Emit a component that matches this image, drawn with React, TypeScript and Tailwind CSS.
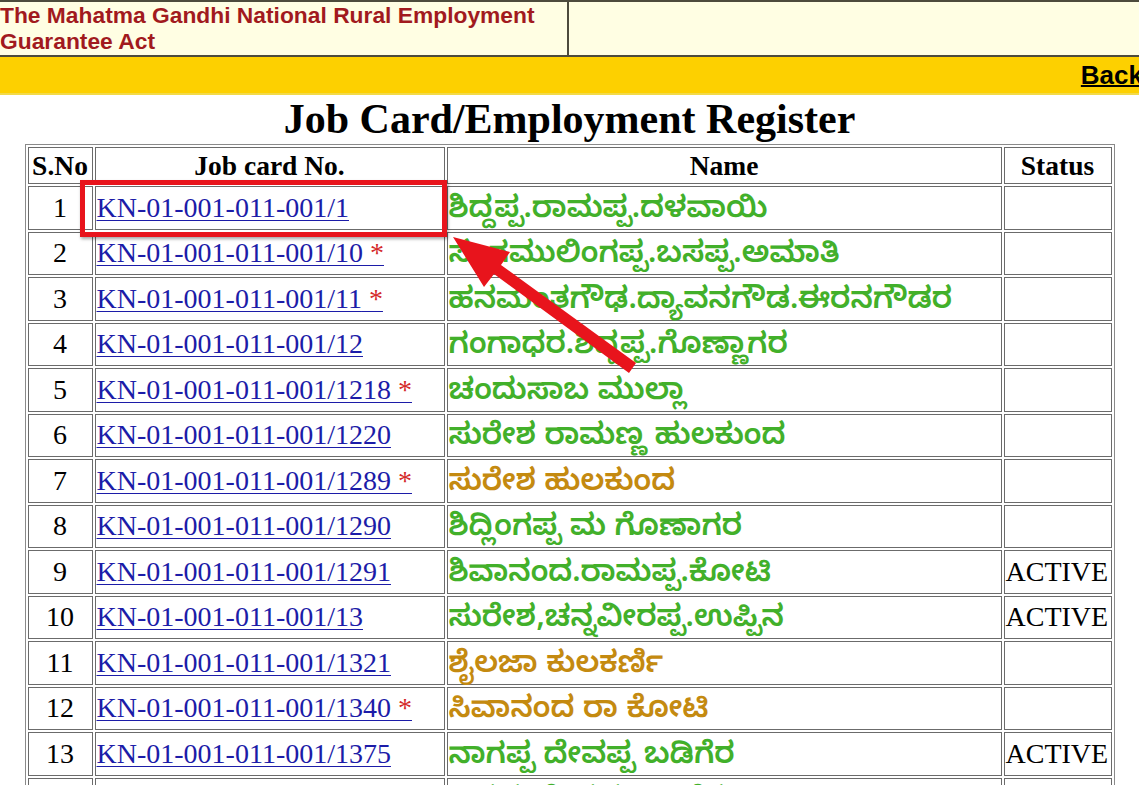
import React from "react";

type Row = {
  sno: number;
  card: string;
  star?: boolean;
  name: string;
  gold?: boolean;
  status?: string;
};

const rows: Row[] = [
  { sno: 1, card: "KN-01-001-011-001/1", name: "ಶಿದ್ದಪ್ಪ.ರಾಮಪ್ಪ.ದಳವಾಯಿ" },
  { sno: 2, card: "KN-01-001-011-001/10", star: true, name: "ಸಂಗಮುಲಿಂಗಪ್ಪ.ಬಸಪ್ಪ.ಅಮಾತಿ" },
  { sno: 3, card: "KN-01-001-011-001/11", star: true, name: "ಹನಮಂತಗೌಢ.ದ್ಯಾವನಗೌಡ.ಈರನಗೌಡರ" },
  { sno: 4, card: "KN-01-001-011-001/12", name: "ಗಂಗಾಧರ.ಶಿದ್ದಪ್ಪ.ಗೊಣ್ಣಾಗರ" },
  { sno: 5, card: "KN-01-001-011-001/1218", star: true, name: "ಚಂದುಸಾಬ ಮುಲ್ಲಾ" },
  { sno: 6, card: "KN-01-001-011-001/1220", name: "ಸುರೇಶ ರಾಮಣ್ಣ ಹುಲಕುಂದ" },
  { sno: 7, card: "KN-01-001-011-001/1289", star: true, name: "ಸುರೇಶ ಹುಲಕುಂದ", gold: true },
  { sno: 8, card: "KN-01-001-011-001/1290", name: "ಶಿದ್ಲಿಂಗಪ್ಪ ಮ ಗೊಣಾಗರ" },
  { sno: 9, card: "KN-01-001-011-001/1291", name: "ಶಿವಾನಂದ.ರಾಮಪ್ಪ.ಕೋಟಿ", status: "ACTIVE" },
  { sno: 10, card: "KN-01-001-011-001/13", name: "ಸುರೇಶ,ಚನ್ನವೀರಪ್ಪ.ಉಪ್ಪಿನ", status: "ACTIVE" },
  { sno: 11, card: "KN-01-001-011-001/1321", name: "ಶೈಲಜಾ ಕುಲಕರ್ಣಿ", gold: true },
  { sno: 12, card: "KN-01-001-011-001/1340", star: true, name: "ಸಿವಾನಂದ ರಾ ಕೋಟಿ", gold: true },
  { sno: 13, card: "KN-01-001-011-001/1375", name: "ನಾಗಪ್ಪ ದೇವಪ್ಪ ಬಡಿಗೆರ", status: "ACTIVE" },
  { sno: 14, card: "KN-01-001-011-001/1376", name: "ಬಸಪ್ಪ ದೇವಪ್ಪ ಬಡಿಗೆರ" },
];

const cell = "border border-[#6b6b6b] p-0 align-middle";

const App = () => {
  return (
    <div className="relative h-[785px] w-full overflow-hidden bg-white font-['Liberation_Serif',serif] text-black">
      {/* top banner */}
      <div className="flex h-[57px] border-y-2 border-[#4d4b3c] bg-[#fffee3]">
        <div className="w-[569px] border-r-2 border-[#4d4b3c] font-['Liberation_Sans',Arial,sans-serif] text-[22.8px] leading-[26px] font-bold text-[#a11a1e]">
          The Mahatma Gandhi National Rural Employment Guarantee Act
        </div>
        <div className="flex-1" />
      </div>
      <div className="flex h-[38px] items-center justify-end border-b-2 border-[#f2da4a] bg-[#fdd000]">
        <a
          href="#"
          className="-mr-[4px] font-['Liberation_Sans',Arial,sans-serif] text-[26px] leading-[30px] font-bold text-black underline decoration-2"
        >
          Back
        </a>
      </div>

      <h1 className="text-center text-[42px] leading-[49px] font-bold">
        Job Card/Employment Register
      </h1>

      <table className="mx-auto w-[1090px] border-separate border-spacing-[2px] border border-[#8a8a8a] text-[28px] leading-[30px]">
        <thead>
          <tr className="text-[27.5px] font-bold">
            <th className={`${cell} h-[37px] w-[65px]`}>S.No</th>
            <th className={`${cell} h-[37px] w-[350px]`}>Job card No.</th>
            <th className={`${cell} h-[37px] w-[555px]`}>Name</th>
            <th className={`${cell} h-[37px]`}>Status</th>
          </tr>
        </thead>
        <tbody>
          {rows.map((r) => (
            <tr key={r.sno}>
              <td className={`${cell} h-[43.5px] text-center`}>{r.sno}</td>
              <td className={`${cell} pl-[1px]`}>
                <a href="#" className="text-[#1c1ca8] underline decoration-1 underline-offset-[3px]">
                  {r.card}
                  {r.star && <span className="text-[#d42a2a]"> *</span>}
                </a>
              </td>
              <td
                className={`${cell} pt-[10px] pl-[1px] font-['Noto_Sans_Kannada','Noto_Sans',sans-serif] text-[30px] leading-[30px] font-semibold whitespace-nowrap ${
                  r.gold ? "text-[#c48a10]" : "text-[#42b02a]"
                }`}
              >
                {r.name}
              </td>
              <td className={`${cell} pl-[1px]`}>{r.status}</td>
            </tr>
          ))}
        </tbody>
      </table>

      {/* annotation: red box + arrow */}
      <div className="pointer-events-none absolute top-[180px] left-[80px] h-[57px] w-[367px] border-[5px] border-[#e8141c] shadow-[1px_2px_3px_rgba(0,0,0,0.35)]" />
      <svg
        className="pointer-events-none absolute top-0 left-0"
        width="1139"
        height="785"
        viewBox="0 0 1139 785"
      >
        <polygon
          points="453,237 510,252 501,265 636,363 629,373 494,274 484,287"
          fill="#e8141c"
        />
      </svg>
    </div>
  );
};

export default App;
